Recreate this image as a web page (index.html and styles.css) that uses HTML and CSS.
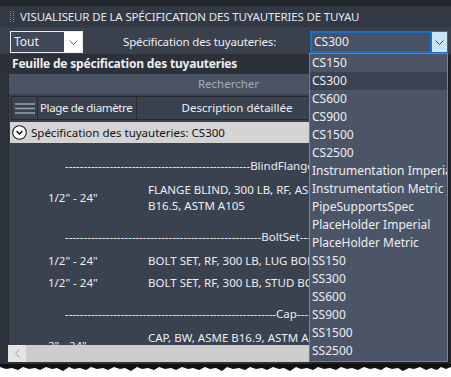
FILE: index.html
```html
<!DOCTYPE html>
<html lang="fr">
<head>
    <meta charset="UTF-8">
    <title>Visualiseur de la spécification des tuyauteries</title>
    <link rel="stylesheet" href="styles.css">
</head>
<body>

<div class="top-strip"></div>

<div class="titlebar">
    <svg class="grip" width="4" height="11" viewBox="0 0 4 11">
        <g fill="#8a909a">
            <rect x="0" y="0" width="1" height="1"/><rect x="3" y="0" width="1" height="1"/>
            <rect x="0" y="2" width="1" height="1"/><rect x="3" y="2" width="1" height="1"/>
            <rect x="0" y="4" width="1" height="1"/><rect x="3" y="4" width="1" height="1"/>
            <rect x="0" y="6" width="1" height="1"/><rect x="3" y="6" width="1" height="1"/>
            <rect x="0" y="8" width="1" height="1"/><rect x="3" y="8" width="1" height="1"/>
            <rect x="0" y="10" width="1" height="1"/><rect x="3" y="10" width="1" height="1"/>
        </g>
    </svg>
    <span class="title">VISUALISEUR DE LA SPÉCIFICATION DES TUYAUTERIES DE TUYAU</span>
</div>

<div class="controls">
    <div class="combo combo-all">
        <span class="combo-value">Tout</span>
        <span class="combo-btn">
            <svg width="9" height="5" viewBox="0 0 9 5"><path d="M0.5 0.5 L4.5 4.5 L8.5 0.5" fill="none" stroke="#6b6f76" stroke-width="1"/></svg>
        </span>
    </div>
    <span class="spec-label">Spécification des tuyauteries:</span>
    <div class="combo combo-spec">
        <span class="combo-value">CS300</span>
        <span class="combo-btn">
            <svg width="9" height="5" viewBox="0 0 9 5"><path d="M0.5 0.5 L4.5 4.5 L8.5 0.5" fill="none" stroke="#3c3f44" stroke-width="1"/></svg>
        </span>
    </div>
</div>

<div class="sheet-head">Feuille de spécification des tuyauteries</div>

<div class="panel">
    <div class="search">Rechercher</div>

    <div class="grid">
        <div class="thead">
            <div class="th th-menu">
                <svg width="20" height="11" viewBox="0 0 20 11">
                    <g stroke="#9ba1ab" stroke-width="1.5">
                        <line x1="0" y1="1" x2="20" y2="1"/>
                        <line x1="0" y1="5.5" x2="20" y2="5.5"/>
                        <line x1="0" y1="10" x2="20" y2="10"/>
                    </g>
                </svg>
            </div>
            <div class="th th-range">Plage de diamètre</div>
            <div class="th th-desc">Description détaillée</div>
        </div>

        <div class="group-row">
            <svg class="group-icon" width="15" height="15" viewBox="0 0 15 15">
                <circle cx="7.5" cy="7.5" r="6.8" fill="#ffffff" stroke="#1b1b1b" stroke-width="1.1"/>
                <path d="M4.6 6.2 L7.5 9 L10.4 6.2" fill="none" stroke="#1b1b1b" stroke-width="1.6"/>
            </svg>
            <span>Spécification des tuyauteries: CS300</span>
        </div>

        <div class="rows">
            <div class="sep">--------------------------------------------------BlindFlange---------------------------</div>
            <div class="row">
                <div class="diam">1/2" - 24"</div>
                <div class="desc">FLANGE BLIND, 300 LB, RF, ASME<br>B16.5, ASTM A105</div>
            </div>
            <div class="sep">-----------------------------------------------------BoltSet------------------------------</div>
            <div class="row">
                <div class="diam">1/2" - 24"</div>
                <div class="desc">BOLT SET, RF, 300 LB, LUG BOLT</div>
            </div>
            <div class="row">
                <div class="diam">1/2" - 24"</div>
                <div class="desc">BOLT SET, RF, 300 LB, STUD BOLT</div>
            </div>
            <div class="sep">---------------------------------------------------------Cap----------------------------------</div>
            <div class="row">
                <div class="diam">2" - 24"</div>
                <div class="desc">CAP, BW, ASME B16.9, ASTM A234<br>WPB</div>
            </div>
        </div>

        <div class="hscroll">
            <span class="hscroll-btn">
                <svg width="5" height="9" viewBox="0 0 5 9"><path d="M4.5 0.5 L0.5 4.5 L4.5 8.5" fill="none" stroke="#a3a3a3" stroke-width="1"/></svg>
            </span>
            <span class="hscroll-track"></span>
        </div>
    </div>
</div>

<div class="bottom-edge"></div>
<svg class="torn" width="451" height="13" viewBox="0 0 451 13">
    <rect width="451" height="13" fill="#ffffff"/>
    <path d="M0 0 H451 V3 L446 5 L441 3 L437 6 L431 4 L426 6 L420 3 L414 5 L409 4 L403 7 L398 4 L392 5 L386 3 L381 6 L375 4 L370 5 L364 3 L358 6 L352 4 L347 5 L341 3 L336 6 L330 4 L324 5 L318 3 L313 6 L307 4 L301 5 L296 3 L290 7 L284 4 L279 5 L273 3 L267 6 L262 4 L256 5 L250 3 L245 6 L239 4 L233 5 L227 3 L222 7 L216 4 L210 5 L205 3 L199 6 L193 4 L188 5 L182 3 L176 6 L171 4 L165 5 L159 3 L154 6 L148 4 L142 5 L137 3 L131 7 L125 4 L120 5 L114 3 L108 6 L103 4 L97 5 L91 3 L86 6 L80 4 L74 5 L69 3 L63 7 L57 4 L52 5 L46 3 L40 6 L35 4 L29 5 L23 3 L18 6 L12 4 L6 5 L0 3 Z" fill="#111111"/>
</svg>

<div class="dropdown">
    <div class="dd-item">CS150</div>
    <div class="dd-item dd-selected">CS300</div>
    <div class="dd-item">CS600</div>
    <div class="dd-item">CS900</div>
    <div class="dd-item">CS1500</div>
    <div class="dd-item">CS2500</div>
    <div class="dd-item">Instrumentation Imperial</div>
    <div class="dd-item">Instrumentation Metric</div>
    <div class="dd-item">PipeSupportsSpec</div>
    <div class="dd-item">PlaceHolder Imperial</div>
    <div class="dd-item">PlaceHolder Metric</div>
    <div class="dd-item">SS150</div>
    <div class="dd-item">SS300</div>
    <div class="dd-item">SS600</div>
    <div class="dd-item">SS900</div>
    <div class="dd-item">SS1500</div>
    <div class="dd-item">SS2500</div>
</div>

</body>
</html>
```

FILE: styles.css
```css
body {
    margin: 0;
    width: 451px;
    height: 377px;
    overflow: hidden;
    position: relative;
    background-color: #2c313a;
    color: #eceef2;
    font-family: 'Noto Sans', 'Open Sans', sans-serif;
    font-size: 11.5px;
}

.top-strip {
    height: 6px;
    background-color: #22262d;
}

/* barre de titre */
.titlebar {
    height: 21px;
    display: flex;
    align-items: center;
    gap: 6px;
    padding-left: 10px;
    background-color: #323844;
}

.title {
    color: #e3e6eb;
    white-space: nowrap;
    letter-spacing: -0.15px;
}

/* ligne des listes */
.controls {
    height: 27px;
    display: flex;
    align-items: flex-start;
    padding: 4px 3px 0 10px;
    box-sizing: border-box;
    background-color: #3a414d;
}

.combo {
    height: 22px;
    display: flex;
    box-sizing: border-box;
}

.combo-all {
    width: 73px;
    border: 1px solid #e9ebee;
}

.combo-all .combo-value {
    flex: 1;
    background-color: #404959;
    padding-left: 3px;
    line-height: 20px;
    font-size: 12px;
}

.combo-all .combo-btn {
    width: 18px;
    background-color: #ffffff;
    display: flex;
    align-items: center;
    justify-content: center;
}

.spec-label {
    margin-left: 40px;
    line-height: 22px;
    white-space: nowrap;
    letter-spacing: -0.15px;
}

.combo-spec {
    width: 138px;
    margin-left: auto;
}

.combo-spec .combo-value {
    flex: 1;
    border: 2px solid #1670cc;
    background-color: #485264;
    padding-left: 2px;
    line-height: 18px;
    font-size: 12px;
}

.combo-spec .combo-btn {
    width: 15px;
    background-color: #cce4f7;
    border: 1px solid #1670cc;
    border-left: none;
    display: flex;
    align-items: center;
    justify-content: center;
}

.sheet-head {
    height: 20px;
    line-height: 20px;
    padding-left: 12px;
    font-weight: bold;
    font-size: 12px;
    letter-spacing: -0.2px;
    background-color: #2b3039;
}

/* panneau */
.panel {
    margin: 0 3px 0 8px;
    background-color: #3a4250;
    border-left: 1px solid #262a31;
}

.search {
    height: 20px;
    line-height: 20px;
    text-align: center;
    color: #a6abb3;
    background-color: #4b5464;
}

.grid {
    padding: 2px 0 0 2px;
}

.thead {
    height: 24px;
    display: flex;
    box-sizing: border-box;
    border: 1px solid #262b33;
    white-space: nowrap;
}

.th {
    line-height: 22px;
    border-right: 1px solid #262b33;
}

.th-menu {
    width: 26px;
    box-sizing: border-box;
    display: flex;
    align-items: center;
    justify-content: center;
}

.th-range {
    width: 99px;
    box-sizing: border-box;
    padding-left: 2px;
    letter-spacing: -0.35px;
    overflow: hidden;
}

.th-desc {
    width: 200px;
    text-align: center;
}

.group-row {
    height: 21px;
    margin: 2px 0 0 -1px;
    display: flex;
    align-items: center;
    gap: 4px;
    padding-left: 2px;
    background-color: #d4d4d4;
    color: #121212;
    white-space: nowrap;
}

.group-icon {
    flex: none;
    margin-top: -1px;
}

/* lignes */
.rows {
    height: 202px;
    overflow: hidden;
    padding-top: 6px;
    box-sizing: border-box;
}

.sep {
    height: 33px;
    line-height: 33px;
    padding-left: 54px;
    white-space: nowrap;
    overflow: hidden;
}

.row {
    display: grid;
    grid-template-columns: 126px 1fr;
    line-height: 16px;
    padding-bottom: 6px;
    white-space: nowrap;
}

.diam {
    align-self: center;
    padding-left: 37px;
}

.desc {
    padding-left: 11px;
}

.hscroll {
    height: 17px;
    display: flex;
    margin-left: -3px;
}

.hscroll-btn {
    width: 18px;
    background-color: #e4e4e4;
    display: flex;
    align-items: center;
    justify-content: center;
}

.hscroll-track {
    flex: 1;
    background-color: #cdcdcd;
}

.bottom-edge {
    height: 2px;
    background-color: #2c313a;
}

.torn {
    display: block;
}

/* liste déroulante ouverte */
.dropdown {
    position: absolute;
    left: 309px;
    top: 53px;
    width: 139px;
    height: 309px;
    box-sizing: border-box;
    border: 1px solid #7b818a;
    background-color: #4c5567;
    box-shadow: 2px 2px 3px rgba(0, 0, 0, 0.45);
    overflow: hidden;
}

.dd-item {
    height: 18px;
    line-height: 18px;
    padding-left: 2px;
    white-space: nowrap;
    font-size: 12px;
    color: #eceef2;
}

.dd-selected {
    background-color: #3b4352;
}
```
